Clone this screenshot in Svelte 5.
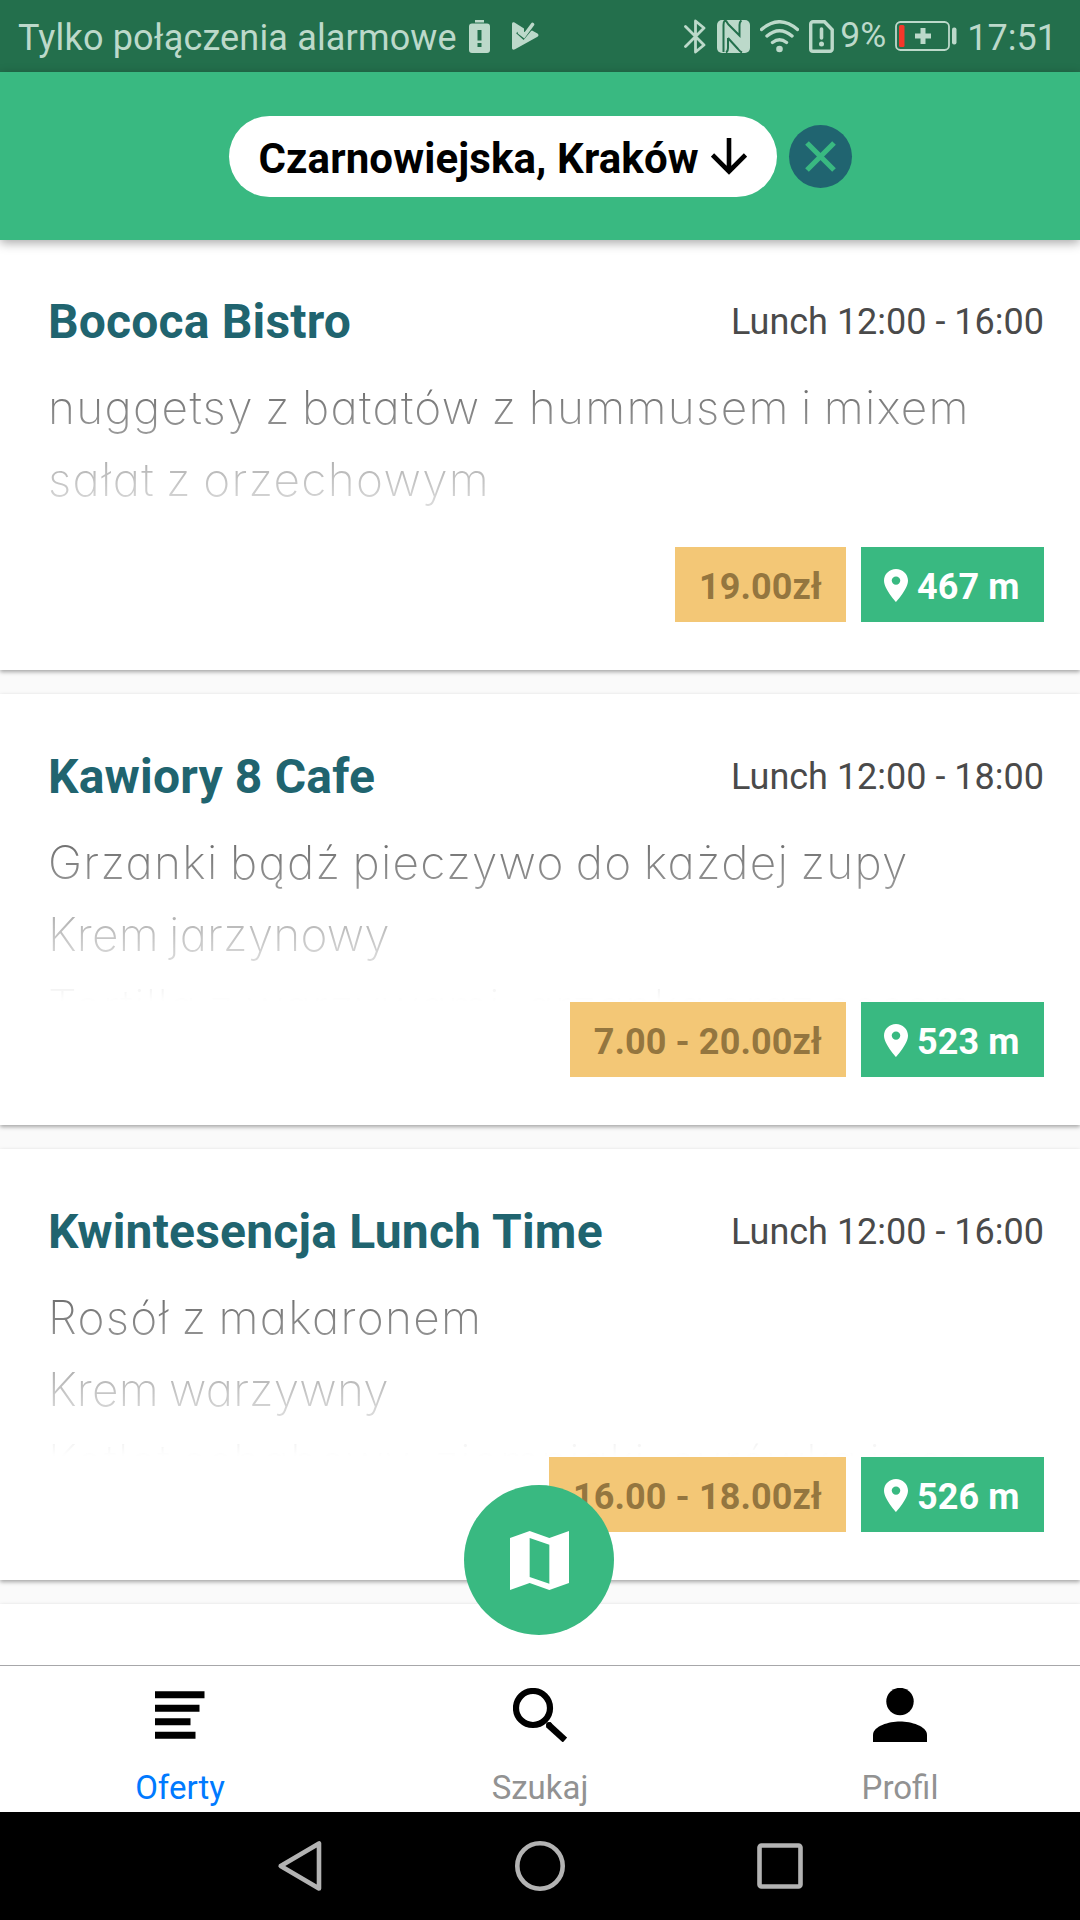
<script>
  const offers = [
    {
      name: 'Bococa Bistro',
      hours: 'Lunch 12:00 - 16:00',
      dishes: ['nuggetsy z batatów z hummusem i mixem', 'sałat z orzechowym'],
      price: '19.00zł',
      distance: '467 m',
    },
    {
      name: 'Kawiory 8 Cafe',
      hours: 'Lunch 12:00 - 18:00',
      dishes: ['Grzanki bądź pieczywo do każdej zupy', 'Krem jarzynowy', 'Tortilla z warzywami, grzanką oraz sosem'],
      price: '7.00 - 20.00zł',
      distance: '523 m',
    },
    {
      name: 'Kwintesencja Lunch Time',
      hours: 'Lunch 12:00 - 16:00',
      dishes: ['Rosół z makaronem', 'Krem warzywny', 'Kotlet schabowy, ziemniaki, surówka i sos'],
      price: '16.00 - 18.00zł',
      distance: '526 m',
    },
  ];
</script>

<div class="screen">
  <div class="status">
    <span class="carrier">Tylko połączenia alarmowe</span>
    <svg class="i-alert" width="21" height="33" viewBox="0 0 21 33">
      <path fill="currentColor" fill-rule="evenodd" d="M6 0h9v2.500H6zM3 3.500h15a3 3 0 0 1 3 3V30a3 3 0 0 1-3 3H3a3 3 0 0 1-3-3V6.500a3 3 0 0 1 3-3zM8.500 10v10.500h4V10zM8.500 23v4h4v-4z" />
    </svg>
    <svg class="i-check" width="27" height="28" viewBox="0 0 27 28">
      <path fill="currentColor" d="M0 2C0 .4 1.200-.2 2.500.5L12 6.500V10L20 8.500l5.500 3c1.300 1 1.300 2.300 0 3.300L3 27.300C1.300 28.200 0 27.500 0 26z" />
      <path d="M4.800 10.500l6.700 6L21 5" fill="none" stroke="#236f4c" stroke-width="2" />
      <path d="M7.500 10.500l4.500 3.500L20.500 2.500" fill="none" stroke="currentColor" stroke-width="3.600" stroke-linecap="round" />
    </svg>
    <div class="spacer"></div>
    <svg class="i-bt" width="22" height="35" viewBox="0 0 22 35">
      <path d="M1.500 7.500L20 26 11.500 33V2L20 9 1.500 27.500" fill="none" stroke="currentColor" stroke-width="2.800" stroke-linejoin="round" stroke-linecap="round" />
    </svg>
    <svg class="i-nfc" width="33" height="33" viewBox="0 0 33 33">
      <rect width="33" height="33" rx="5" fill="currentColor" />
      <path d="M8 0.500C10 1 10 3 12 5l10.500 10.500V5q0-3.500 2-4.500M11 18v10q0 3.500-2 4.500M8 0.500Q6.500 1.500 6.500 5v27M25 32.500Q23 31.500 21 29L11 18" fill="none" stroke="#236f4c" stroke-width="2" />
    </svg>
    <svg class="i-wifi" width="39" height="33" viewBox="0 0 39 33">
      <path d="M1.500 9.500Q19.500-6 37.500 9.500M7 16Q19.500 5.500 32 16M12.500 22.500Q19.500 17 26.500 22.500" fill="none" stroke="currentColor" stroke-width="3.400" stroke-linecap="round" />
      <circle cx="19.500" cy="29" r="3.300" fill="currentColor" />
    </svg>
    <svg class="i-sim" width="25" height="33" viewBox="0 0 25 33">
      <path d="M4 1.700h11.500l7.700 8V29a2.300 2.300 0 0 1-2.300 2.300H4A2.300 2.300 0 0 1 1.700 29V4A2.300 2.300 0 0 1 4 1.700z" fill="none" stroke="currentColor" stroke-width="3.400" />
      <path d="M12.500 9v9" stroke="currentColor" stroke-width="3.600" stroke-linecap="round" />
      <circle cx="12.500" cy="24" r="2.500" fill="currentColor" />
    </svg>
    <span class="percent">9%</span>
    <svg class="i-batt" width="62" height="30" viewBox="0 0 62 30">
      <rect x="1" y="1" width="53" height="28" rx="4.500" fill="none" stroke="currentColor" stroke-width="1.800" />
      <rect x="57" y="6.500" width="4.500" height="17" rx="2" fill="currentColor" />
      <rect x="4" y="4" width="5.500" height="22" rx="1.500" fill="#f5372a" />
      <path d="M20 15h16M28 7v16" stroke="currentColor" stroke-width="5" />
    </svg>
    <span class="clock">17:51</span>
  </div>

  <header class="header">
    <div class="place">
      <span>Czarnowiejska, Kraków</span>
      <svg width="36" height="37" viewBox="0 0 36 37">
        <path d="M18 0v34M1.500 17L18 33.500 34.500 17" fill="none" stroke="#000" stroke-width="4.600" />
      </svg>
    </div>
    <div class="clear">
      <svg width="31" height="31" viewBox="0 0 31 31">
        <path d="M2 2l27 27M29 2L2 29" stroke="#39b981" stroke-width="5.200" />
      </svg>
    </div>
  </header>

  <main class="list">
    {#each offers as offer}
      <section class="card">
        <div class="head">
          <h2>{offer.name}</h2>
          <span class="hours">{offer.hours}</span>
        </div>
        <div class="dishes">
          {#each offer.dishes as dish}
            <p>{dish}</p>
          {/each}
        </div>
        <div class="tags">
          <span class="tag price">{offer.price}</span>
          <span class="tag distance">
            <svg width="24" height="33" viewBox="5 2 14 20" preserveAspectRatio="none">
              <path fill="#fff" fill-rule="evenodd" d="M12 2C8.130 2 5 5.130 5 9c0 5.250 7 13 7 13s7-7.750 7-13c0-3.870-3.130-7-7-7zm0 9.500a2.500 2.500 0 0 1 0-5 2.500 2.500 0 0 1 0 5z" />
            </svg>
            <span>{offer.distance}</span>
          </span>
        </div>
      </section>
    {/each}
    <section class="card"></section>
    <div class="fab">
      <svg width="59" height="59" viewBox="3 3 18 18">
        <path fill="#fff" fill-rule="evenodd" d="M3 5.100L9 3l6 2.100L21 3v15.900L15 21l-6-2.100L3 21zM9 5.150v11.900L15 19.100V7.200z" />
      </svg>
    </div>
  </main>

  <nav class="tabs">
    <div class="tab active">
      <svg width="54" height="54" viewBox="0 0 54 54">
        <path d="M2 3.300h49.500v7H2zM2 16.800h44.500v7H2zM2 30.300h35.500v7H2zM2 43.800h40.500v7H2z" />
      </svg>
      <span>Oferty</span>
    </div>
    <div class="tab">
      <svg width="54" height="54" viewBox="0 0 54 54">
        <circle cx="20" cy="20" r="17" fill="none" stroke="#000" stroke-width="6.200" />
        <path d="M35 36.500L52 52" stroke="#000" stroke-width="6.500" />
        <circle cx="36" cy="37" r="3" />
      </svg>
      <span>Szukaj</span>
    </div>
    <div class="tab">
      <svg width="54" height="54" viewBox="0 0 54 54">
        <circle cx="27" cy="13.500" r="13.700" />
        <path d="M0 54V47C0 38 16 33.500 27 33.500S54 38 54 47v7z" />
      </svg>
      <span>Profil</span>
    </div>
  </nav>

  <div class="system">
    <svg width="50" height="52" viewBox="0 0 50 52">
      <path d="M44 3.500v45L5.700 26z" />
    </svg>
    <svg width="50" height="52" viewBox="0 0 50 52">
      <circle cx="25" cy="26" r="22.700" />
    </svg>
    <svg width="50" height="52" viewBox="0 0 50 52">
      <rect x="4.500" y="5.500" width="41" height="41" rx="2" />
    </svg>
  </div>
</div>

<style>
  :global(body) {
    margin: 0;
    background: #fafafa;
  }
  .screen {
    width: 1080px;
    height: 1920px;
    display: flex;
    flex-direction: column;
    overflow: hidden;
    font-family: Roboto, 'Liberation Sans', sans-serif;
    background: #fafafa;
  }
  .screen * {
    box-sizing: border-box;
  }
  svg {
    display: block;
    flex: none;
  }

  .status {
    height: 72px;
    flex: none;
    display: flex;
    align-items: center;
    padding: 0 23px 0 18px;
    background: #236f4c;
    color: #bcd9ca;
    font-size: 36px;
    line-height: 72px;
    white-space: nowrap;
  }
  .carrier {
    width: 451px;
    padding-top: 3px;
    letter-spacing: 0.160px;
  }
  .i-alert {
    margin-right: 22px;
  }
  .spacer {
    flex: 1;
  }
  .i-bt {
    margin-right: 11px;
  }
  .i-nfc {
    margin-right: 10px;
  }
  .i-wifi {
    margin-right: 10px;
  }
  .i-sim {
    margin-right: 6px;
  }
  .percent {
    width: 55px;
    font-size: 35.500px;
    padding-bottom: 3px;
  }
  .i-batt {
    margin-right: 10px;
  }
  .clock {
    padding-top: 3px;
  }

  .header {
    height: 168px;
    flex: none;
    display: flex;
    align-items: center;
    justify-content: center;
    gap: 12px;
    background: #39b981;
    box-shadow: 0 3px 10px rgba(0, 0, 0, 0.34);
    position: relative;
    z-index: 1;
  }
  .place {
    width: 548px;
    height: 81px;
    display: flex;
    align-items: center;
    justify-content: space-between;
    padding: 0 30px;
    border-radius: 41px;
    background: #fff;
    color: #000;
    font-size: 42px;
    font-weight: 700;
    letter-spacing: 0.120px;
    white-space: nowrap;
  }
  .place span {
    padding-top: 4px;
  }
  .clear {
    width: 63px;
    height: 63px;
    display: flex;
    align-items: center;
    justify-content: center;
    border-radius: 50%;
    background: #206470;
  }

  .list {
    height: 1426px;
    margin-top: -1px;
    flex: none;
    display: flex;
    flex-direction: column;
    gap: 24px;
    overflow: hidden;
    position: relative;
  }
  .card {
    height: 431px;
    flex: none;
    padding: 48px 36px 48px 48px;
    background: #fff;
    box-shadow: 0 2px 4px rgba(0, 0, 0, 0.34);
  }
  .head {
    height: 69px;
    display: flex;
    align-items: center;
    justify-content: space-between;
    white-space: nowrap;
  }
  h2 {
    margin: 0;
    font-size: 48px;
    font-weight: 700;
    letter-spacing: 0.190px;
    color: #20646f;
  }
  .hours {
    font-size: 36px;
    color: #4a4a4a;
  }
  .dishes {
    height: 191px;
    padding-top: 15px;
    overflow: hidden;
    font-family: Inter, Lato, sans-serif;
    font-weight: 250;
    font-size: 46px;
    line-height: 72px;
    letter-spacing: 1.300px;
    word-spacing: -3px;
    font-feature-settings: 'cv11' 1;
    color: #555;
    white-space: nowrap;
    mask-image: linear-gradient(to bottom, #000 2px, transparent 190px);
  }
  .dishes p {
    margin: 0;
  }
  .card:not(:first-child) .dishes p:nth-child(2) {
    letter-spacing: 0.200px;
  }
  .tags {
    display: flex;
    justify-content: flex-end;
    gap: 15px;
  }
  .tag {
    height: 75px;
    display: flex;
    align-items: center;
    padding: 4px 24px 0;
    font-size: 36px;
    font-weight: 700;
    letter-spacing: 0.100px;
    white-space: nowrap;
  }
  .price {
    background: #f3c776;
    color: #94763f;
  }
  .distance {
    width: 183px;
    gap: 9px;
    background: #39b981;
    color: #fff;
  }
  .distance svg {
    margin: 0 0 2px -1px;
  }
  .fab {
    position: absolute;
    left: 464px;
    top: 1246px;
    width: 150px;
    height: 150px;
    display: flex;
    align-items: center;
    justify-content: center;
    border-radius: 50%;
    background: #39b981;
  }

  .tabs {
    height: 147px;
    flex: none;
    display: flex;
    border-top: 1px solid #a7a7aa;
    background: #fff;
  }
  .tab {
    flex: 1;
    display: flex;
    flex-direction: column;
    align-items: center;
    padding-top: 22px;
    font-size: 33px;
    line-height: 40px;
    color: #929292;
  }
  .tab span {
    margin-top: 26px;
  }
  .tab.active {
    color: #007aff;
  }

  .system {
    flex: 1;
    display: flex;
    align-items: center;
    justify-content: center;
    gap: 190px;
    background: #000;
  }
  .system svg {
    fill: none;
    stroke: #b3b3b3;
    stroke-width: 4.600;
    stroke-linejoin: round;
  }
</style>
